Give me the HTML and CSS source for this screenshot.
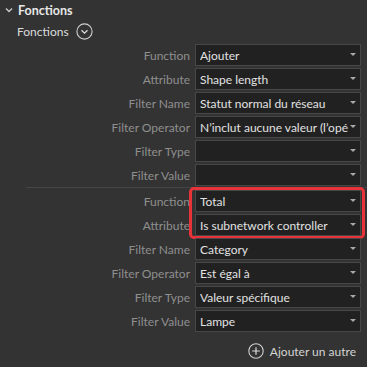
FILE: index.html
```html
<!DOCTYPE html>
<html>
<head>
<meta charset="utf-8">
<link rel="stylesheet" href="styles.css">
</head>
<body>
<div class="panel">
  <div class="section-head">
    <svg class="chev" width="8" height="6" viewBox="0 0 8 6"><path d="M1 1.5 L4 4.5 L7 1.5" fill="none" stroke="#c8c8c8" stroke-width="1.4"/></svg>
    <span class="section-title">Fonctions</span>
  </div>
  <div class="sub-head">
    <span class="sub-title">Fonctions</span>
    <svg class="circle-chev" width="17" height="17" viewBox="0 0 17 17"><circle cx="8.5" cy="8.5" r="7.6" fill="none" stroke="#cfcfcf" stroke-width="1.1"/><path d="M5.5 7.3 L8.5 10.2 L11.5 7.3" fill="none" stroke="#dcdcdc" stroke-width="1.3"/></svg>
  </div>

  <div class="group">
    <div class="row"><span class="label">Function</span><div class="select"><span class="value">Ajouter</span><i class="arrow"></i></div></div>
    <div class="row"><span class="label">Attribute</span><div class="select"><span class="value">Shape length</span><i class="arrow"></i></div></div>
    <div class="row"><span class="label">Filter Name</span><div class="select"><span class="value">Statut normal du réseau</span><i class="arrow"></i></div></div>
    <div class="row"><span class="label">Filter Operator</span><div class="select"><span class="value">N’inclut aucune valeur (l’opé</span><i class="arrow"></i></div></div>
    <div class="row"><span class="label">Filter Type</span><div class="select"><span class="value"></span><i class="arrow"></i></div></div>
    <div class="row"><span class="label">Filter Value</span><div class="select"><span class="value"></span><i class="arrow"></i></div></div>
  </div>

  <div class="separator"></div>

  <div class="group group2">
    <div class="highlight"></div>
    <div class="row"><span class="label">Function</span><div class="select"><span class="value">Total</span><i class="arrow"></i></div></div>
    <div class="row"><span class="label">Attribute</span><div class="select"><span class="value">Is subnetwork controller</span><i class="arrow"></i></div></div>
    <div class="row"><span class="label">Filter Name</span><div class="select"><span class="value">Category</span><i class="arrow"></i></div></div>
    <div class="row"><span class="label">Filter Operator</span><div class="select"><span class="value">Est égal à</span><i class="arrow"></i></div></div>
    <div class="row"><span class="label">Filter Type</span><div class="select"><span class="value">Valeur spécifique</span><i class="arrow"></i></div></div>
    <div class="row"><span class="label">Filter Value</span><div class="select"><span class="value">Lampe</span><i class="arrow"></i></div></div>
  </div>

  <div class="add-row">
    <svg class="plus" width="16" height="16" viewBox="0 0 16 16"><circle cx="8" cy="8" r="7.2" fill="none" stroke="#cfcfcf" stroke-width="1.1"/><path d="M8 4.2 V11.8 M4.2 8 H11.8" stroke="#dcdcdc" stroke-width="1.2"/></svg>
    <span class="add-text">Ajouter un autre</span>
  </div>
</div>
</body>
</html>
```

FILE: styles.css
```css
html, body {
  margin: 0;
  padding: 0;
  background: #333333;
}
body {
  font-family: Lato, "Open Sans", sans-serif;
  font-size: 12px;
  color: #e0e0e0;
  width: 367px;
  height: 367px;
  overflow: hidden;
}
.panel {
  display: flex;
  flex-direction: column;
}
.section-head {
  display: flex;
  align-items: center;
  height: 20px;
  padding-left: 5px;
  gap: 5px;
}
.section-title {
  font-weight: bold;
  font-size: 12.5px;
  color: #e8e8e8;
}
.sub-head {
  display: flex;
  align-items: center;
  height: 22px;
  padding-left: 17px;
  gap: 7px;
}
.sub-title {
  font-size: 12px;
  color: #dcdcdc;
}
.group {
  display: flex;
  flex-direction: column;
  gap: 2px;
  padding-top: 2px;
  position: relative;
}
.row {
  display: flex;
  align-items: center;
  height: 22px;
}
.label {
  width: 195px;
  text-align: right;
  color: #8f8f8f;
  padding-right: 5px;
  box-sizing: border-box;
  font-size: 12px;
  white-space: nowrap;
}
.select {
  width: 166px;
  height: 22px;
  box-sizing: border-box;
  background: #212121;
  border: 1px solid #474747;
  display: flex;
  align-items: center;
  padding-left: 4px;
  position: relative;
  white-space: nowrap;
  color: #e2e2e2;
}
.value {
  display: block;
  overflow: hidden;
  width: 150px;
  font-size: 12px;
}
.arrow {
  position: absolute;
  right: 4px;
  top: 8px;
  width: 0;
  height: 0;
  border-left: 3px solid transparent;
  border-right: 3px solid transparent;
  border-top: 3px solid #a8a8a8;
}
.separator {
  height: 1px;
  background: #454545;
  margin: 1px 0 0 26px;
}
.group2 {
  padding-top: 2px;
}
.highlight {
  position: absolute;
  left: 189px;
  top: -1px;
  width: 176px;
  height: 52px;
  box-sizing: border-box;
  border: 3px solid #e8333a;
  border-radius: 5px;
  pointer-events: none;
}
.add-row {
  display: flex;
  align-items: center;
  justify-content: flex-end;
  gap: 6px;
  padding-right: 11px;
  margin-top: 8px;
  height: 22px;
}
.add-text {
  font-size: 12px;
  color: #d4d4d4;
}
```
